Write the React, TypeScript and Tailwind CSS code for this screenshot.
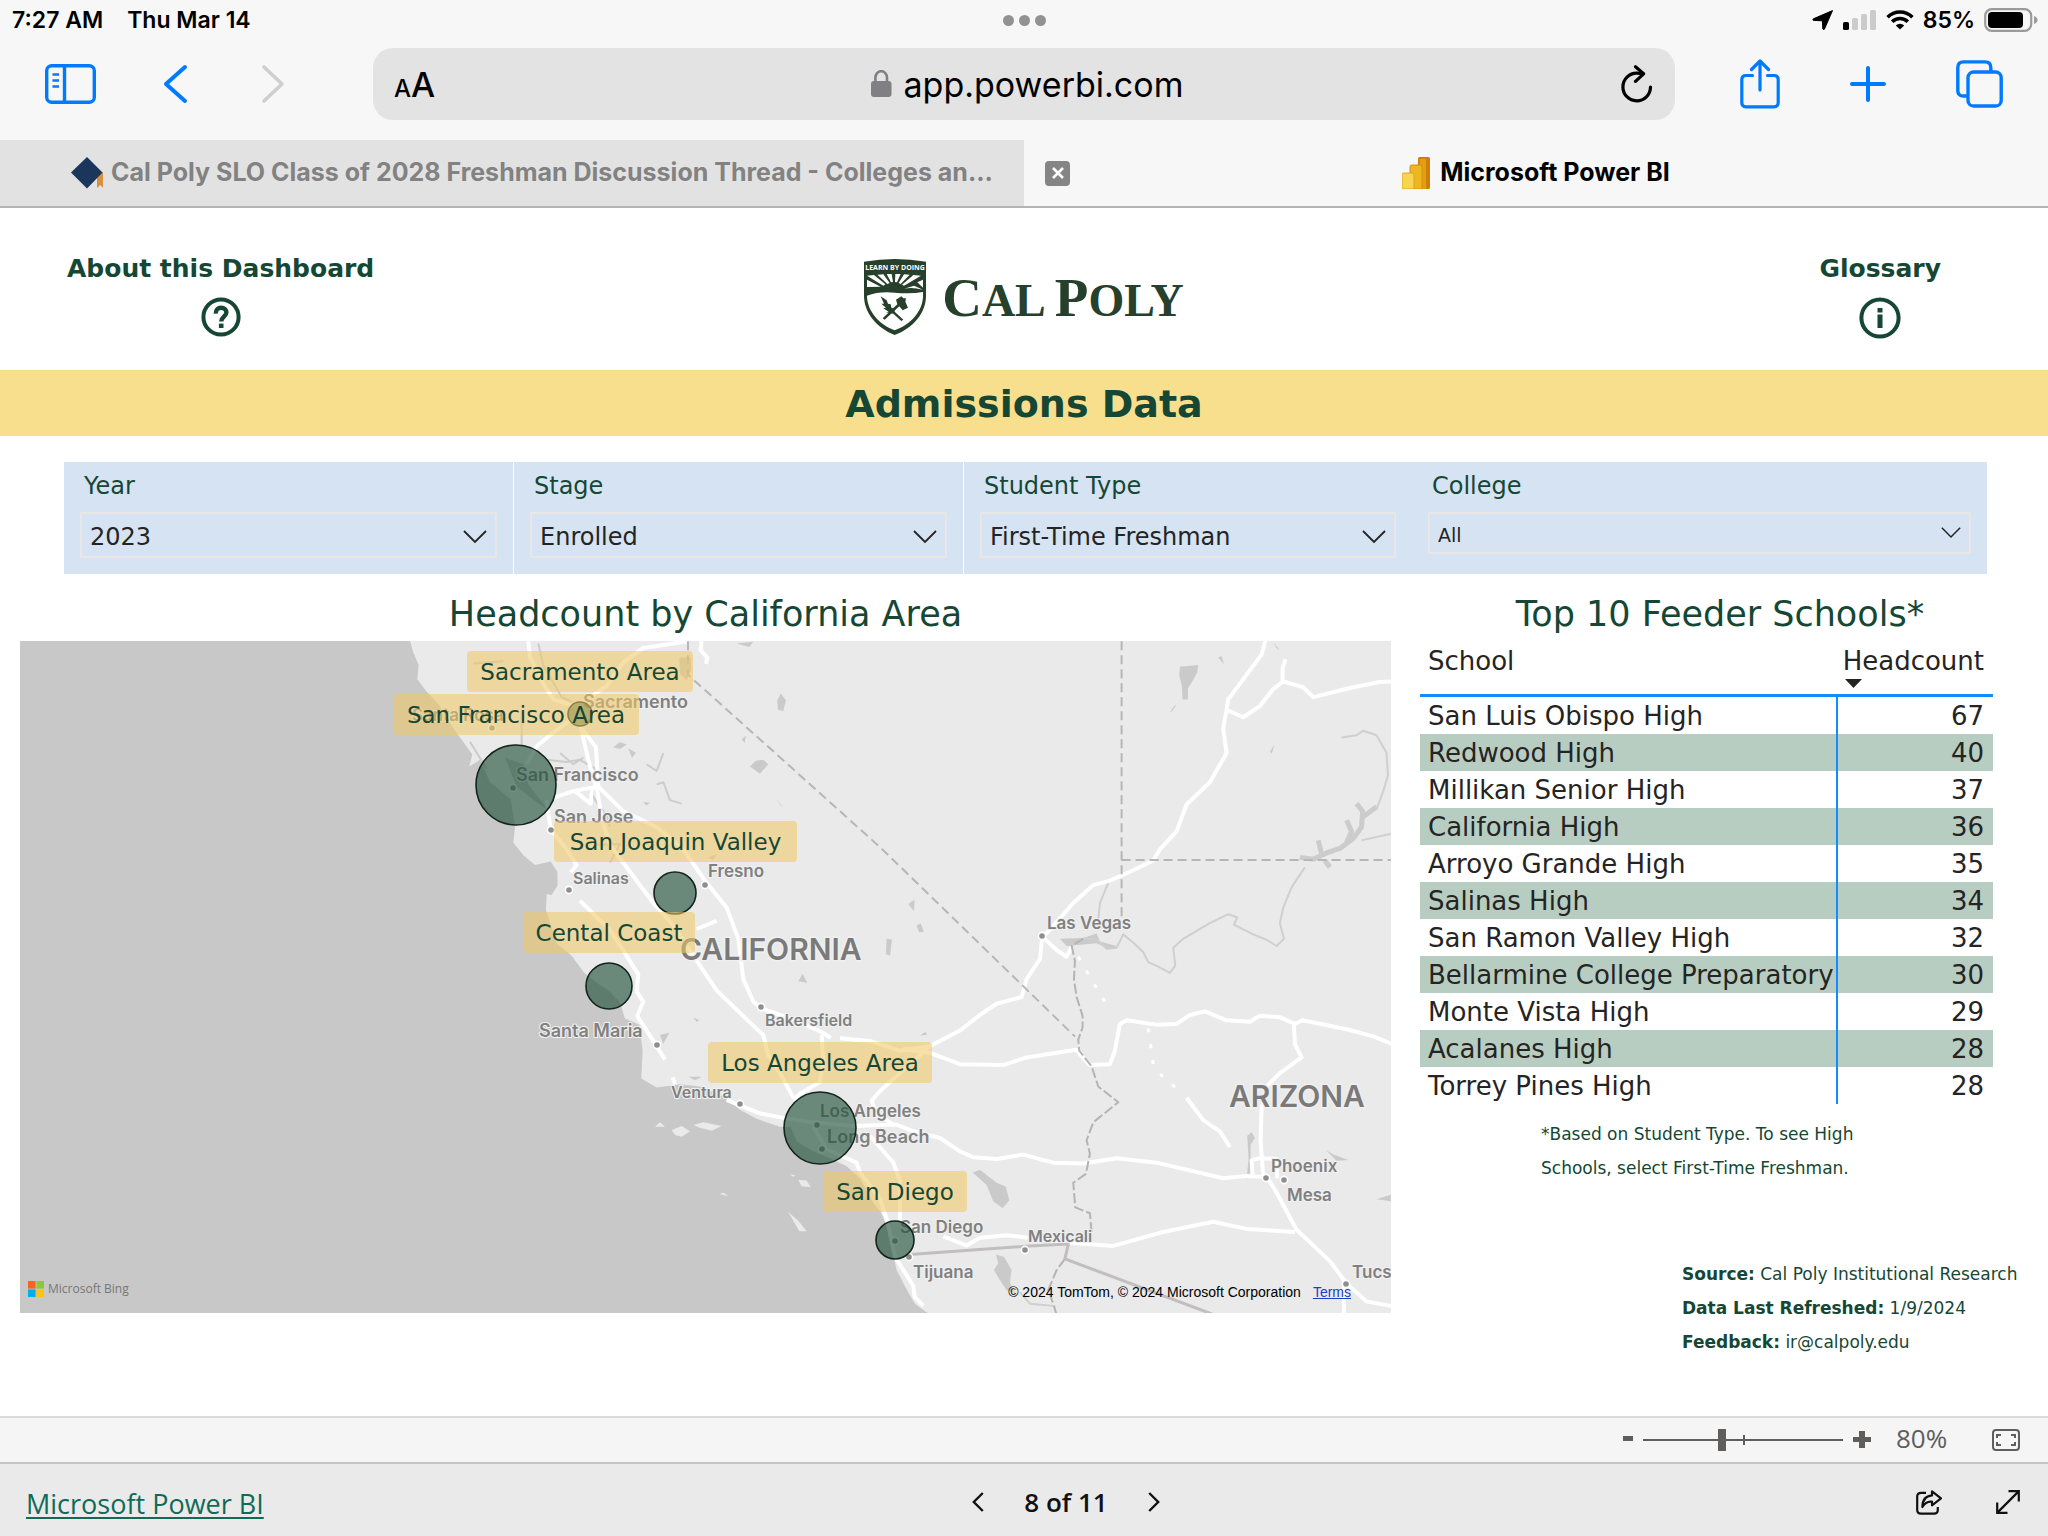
import React, { useState } from "react";

const FILTERS = [
  { id: "year", label: "Year", value: "2023", small: false },
  { id: "stage", label: "Stage", value: "Enrolled", small: false },
  { id: "type", label: "Student Type", value: "First-Time Freshman", small: false },
  { id: "college", label: "College", value: "All", small: true },
];

const SCHOOLS = [
  { name: "San Luis Obispo High", count: 67 },
  { name: "Redwood High", count: 40 },
  { name: "Millikan Senior High", count: 37 },
  { name: "California High", count: 36 },
  { name: "Arroyo Grande High", count: 35 },
  { name: "Salinas High", count: 34 },
  { name: "San Ramon Valley High", count: 32 },
  { name: "Bellarmine College Preparatory", count: 30 },
  { name: "Monte Vista High", count: 29 },
  { name: "Acalanes High", count: 28 },
  { name: "Torrey Pines High", count: 28 },
];

const BUBBLES = [
  { cx: 580, cy: 714, r: 12 },
  { cx: 516, cy: 785, r: 40 },
  { cx: 675, cy: 893, r: 21 },
  { cx: 609, cy: 986, r: 23 },
  { cx: 820, cy: 1128, r: 36 },
  { cx: 895, cy: 1240, r: 19 },
];

const CALLOUTS = [
  { text: "Sacramento Area", x: 467, y: 651, w: 226 },
  { text: "San Francisco Area", x: 393, y: 694, w: 246 },
  { text: "San Joaquin Valley", x: 554, y: 821, w: 243 },
  { text: "Cental Coast", x: 523, y: 912, w: 172 },
  { text: "Los Angeles Area", x: 708, y: 1042, w: 224 },
  { text: "San Diego", x: 823, y: 1171, w: 144 },
];

const CITIES = [
  { name: "Sacramento", x: 583, y: 708, size: 18 },
  { name: "Santa Rosa", x: 412, y: 721, size: 17, dot: [492, 728] },
  { name: "San Francisco", x: 516, y: 781, size: 18, dot: [513, 788] },
  { name: "San Jose", x: 554, y: 823, size: 18, dot: [551, 830] },
  { name: "Salinas", x: 573, y: 884, size: 16, dot: [569, 890] },
  { name: "Fresno", x: 708, y: 877, size: 17, dot: [705, 885] },
  { name: "Santa Maria", x: 539, y: 1037, size: 18, dot: [657, 1045] },
  { name: "Bakersfield", x: 765, y: 1026, size: 16, dot: [761, 1007] },
  { name: "Ventura", x: 671, y: 1098, size: 16, dot: [740, 1104] },
  { name: "Los Angeles", x: 820, y: 1117, size: 17, dot: [817, 1125] },
  { name: "Long Beach", x: 827, y: 1143, size: 18, dot: [822, 1149] },
  { name: "San Diego", x: 900, y: 1233, size: 17, dot: [895, 1241] },
  { name: "Tijuana", x: 913, y: 1278, size: 17, dot: [909, 1257] },
  { name: "Mexicali", x: 1028, y: 1242, size: 16, dot: [1025, 1250] },
  { name: "Las Vegas", x: 1047, y: 929, size: 17, dot: [1042, 936] },
  { name: "Phoenix", x: 1271, y: 1172, size: 17, dot: [1266, 1178] },
  { name: "Mesa", x: 1287, y: 1201, size: 17, dot: [1284, 1180] },
  { name: "Tucson", x: 1352, y: 1278, size: 17, dot: [1346, 1284] },
];

// Terrain paths share one coordinate frame, see the <g> in AreaMap
const LAND =
  "M90 25 L100 50 L116 78 L112 110 L140 138 L175 165 L192 188 L225 225 L250 250 L277 278 L268 305 L300 290 L330 340 L392 378 L405 440 L400 475 L430 503 L465 525 L512 517 L532 540 L533 570 L515 592 L500 590 L498 625 L530 700 L575 728 L612 765 L650 788 L690 808 L720 832 L735 868 L778 882 L788 940 L784 1002 L830 1022 L900 1015 L960 1020 L1040 1045 L1080 1072 L1130 1092 L1200 1110 L1232 1110 L1250 1142 L1300 1165 L1350 1180 L1400 1198 L1440 1225 L1480 1280 L1502 1300 L1520 1330 L1535 1380 L1550 1430 L1585 1480 L1605 1505 L1650 1530 L1660 1560 L3100 1560 L3100 0 L90 0 Z";

const ISLANDS =
  "M825 1110 L840 1100 L855 1110 Z M875 1117 L905 1108 L930 1120 L905 1132 L885 1128 Z M940 1106 L970 1100 L1025 1108 L995 1119 L960 1112 Z M1255 1228 L1280 1230 L1292 1245 L1265 1243 Z M1225 1300 L1255 1320 L1280 1343 L1258 1343 L1240 1320 Z M1018 1260 L1032 1257 L1045 1265 Z M1230 1216 L1246 1218 L1240 1222 Z";

const LAKES =
  "M898 62 L932 60 L934 90 L920 112 L900 98 Z M1110 305 L1128 292 L1150 290 L1165 300 L1140 321 Z M1192 158 L1202 142 L1218 157 L1210 181 L1194 178 Z M2400 82 L2455 78 L2452 95 L2436 116 L2424 130 L2424 155 L2408 155 L2406 125 L2398 102 Z M2370 185 L2380 172 L2390 166 L2376 182 Z M2515 62 L2525 58 L2532 76 Z M1778 1212 L1800 1206 L1850 1235 L1878 1244 L1888 1274 L1868 1292 L1840 1276 L1820 1240 Z M1848 1395 L1872 1400 L1895 1430 L1890 1458 L1905 1482 L1880 1475 L1858 1450 L1842 1430 L1855 1415 Z M2040 690 L2110 688 L2150 678 L2160 696 L2210 706 L2190 714 L2150 700 L2060 706 Z M375 285 L430 300 L445 345 L505 402 L470 385 L410 350 Z M700 262 L720 250 L740 256 L720 266 Z M745 264 L768 274 L756 286 Z M1585 612 L1604 602 L1602 628 Z M1610 660 L1622 655 L1632 674 L1618 676 Z M1520 690 L1536 692 L1530 728 L1518 724 Z M1255 785 L1268 768 L1282 788 Z M840 905 L868 900 L850 925 Z M925 998 L965 998 L945 1006 Z M1190 378 L1210 396 L1200 390 Z M2670 272 L2684 256 L2676 276 Z M2838 1162 L2860 1172 L2905 1184 L2870 1186 Z M2990 1272 L3033 1262 L3033 1276 Z M2602 1130 L2615 1122 L2625 1135 L2612 1150 L2612 1210 L2600 1230 L2606 1180 Z M1085 244 L1098 236 L1094 252 Z M985 508 L1012 500 L998 514 Z M790 384 L812 386 L798 392 Z M1620 906 L1636 898 L1642 904 Z M1070 30 L1120 26 L1108 38 Z M940 866 L958 872 L950 876 Z M2680 26 L2700 46 L2690 40 Z";

const RESERVOIR =
  "M2760 508 L2800 512 L2840 498 L2880 488 L2920 466 L2945 440 L2948 405 L2930 388 M2945 420 L2990 395 M2815 470 L2825 500 M2900 425 L2915 450 L2900 475 M2835 515 L2850 530";

const CREEKS =
  "M475 30 L490 80 L530 130 L545 150 L575 160 M425 180 L425 260 M270 250 L320 310 M500 290 L560 295 L600 290 L650 312 M540 275 L580 300 L610 285 M630 360 L650 385 L680 415 L690 440 M800 300 L830 315 L850 275 M830 345 L850 340 L870 380 L905 388 M280 75 L370 70 M650 480 L720 478 L690 520";

const RIVER =
  "M2075 705 L2110 690 L2150 690 L2180 712 L2210 710 L2230 680 L2262 700 L2290 720 L2305 742 L2335 752 L2370 766 L2386 750 L2380 710 L2410 690 L2450 672 L2490 655 L2545 635 L2572 642 L2562 658 L2620 680 L2660 692 L2690 706 L2712 690 L2700 655 L2710 620 L2735 575 L2775 530 M2990 400 L3010 360 L3024 325 L3020 275 L2990 235 L2950 225 L2930 235 L2885 240 M2945 470 L3033 455 M2155 650 L2160 610 L2185 565 M1920 1480 L1950 1505 L2020 1510";

const ROADS = [
  "M445 25 L450 60 L490 120 L520 155 L590 172 L608 235 L625 290 L650 355",
  "M590 172 L680 125 L730 72 L790 40 L880 30 L925 25",
  "M965 25 L962 45 L982 62 L978 76",
  "M590 190 L510 235 L470 260 L440 300",
  "M520 375 L580 360 L650 350 L665 420 L690 480 L740 530 L820 610 L880 660 L960 750 L1010 805 L1100 870 L1150 905 L1165 950 L1200 990 L1240 1045",
  "M605 220 L648 262 L655 350 L730 405 L830 440 L910 490 L975 560 L1040 620 L1075 690 L1090 780 L1120 830 L1143 845 L1240 870 L1330 900 L1352 912",
  "M585 360 L632 388 L636 350",
  "M500 380 L512 445 L560 490 L590 525 L572 542",
  "M600 605 L690 670 L740 728 L775 770 L770 808 L790 830 L772 862 L830 930 L855 960",
  "M878 1000 L886 1015 M1040 1050 L1080 1062 L1140 1080 L1210 1090 L1300 1100 L1420 1108 L1550 1105 L1600 1120 L1680 1135 L1740 1165 L1780 1178 L1850 1182 L1930 1172 L2020 1190 L2110 1192 L2210 1180 L2330 1190 L2530 1225 L2600 1220 L2660 1222 L2685 1250 L2750 1340 L2850 1410 L2900 1460 L2960 1500 L3040 1511",
  "M1380 912 L1470 918 L1560 940 L1650 930 M1325 905 L1330 960 L1320 1010 L1260 1036 L1240 1050",
  "M950 668 L1010 650",
  "M2660 15 L2645 55 L2545 155 L2530 220 L2540 275 L2490 340 L2420 390 L2390 450 L2340 490 L2320 515 L2250 540 L2190 560 L2140 570 L2080 610 L2010 670 L1987 685 L1980 735 L1940 780 L1925 820 L1850 835 L1800 860 L1740 895 L1650 930 L1560 990 L1500 1030 L1475 1052 L1490 1080 L1540 1105",
  "M3040 115 L3000 116 L2920 128 L2800 150 L2770 128 L2710 115 L2680 132 L2640 170 L2590 195 L2545 180 M2708 115 L2708 85 L2717 65",
  "M1570 935 L1650 945 L1740 970 L1870 972 L1940 955 L2088 938 L2130 972 L2190 970 L2205 940 L2220 880 L2240 872 L2330 882 L2390 880 L2430 860 L2475 852 L2540 872 L2610 875 L2640 862 L2700 865 L2745 880 L2768 872 L2900 892 L2980 908 L3040 926",
  "M2742 880 L2745 925 L2765 955 L2700 990 L2660 1020 L2645 1070 L2642 1140 L2650 1222",
  "M2618 1215 L2615 1185 L2640 1180 L2690 1182 L2692 1225",
  "M1690 1355 L1760 1375 L1800 1358 L1880 1352 L2090 1370 L2200 1376 L2350 1345 L2500 1322 L2600 1338 L2745 1345",
  "M2892 1460 L2892 1540",
  "M1987 685 L2030 715 L2060 730 L2075 708",
  "M1300 1110 L1340 1160 L1430 1190 L1440 1212 L1500 1270 L1522 1320 L1545 1400 L1600 1465 L1604 1490 L1630 1510",
  "M1470 1130 L1540 1190 L1560 1230 L1560 1320",
  "M2420 1045 L2470 1095 L2520 1120 L2550 1155",
];

function SafariChrome(): React.JSX.Element {
  return (
    <header className="bg-[#f7f7f7] font-['Inter','Liberation_Sans',sans-serif]">
      {/* Status bar */}
      <div className="grid h-10 grid-cols-3 items-center pr-[10px] pl-3 text-[23px] font-semibold text-black">
        <div className="flex gap-6">
          <span>7:27 AM</span>
          <span>Thu Mar 14</span>
        </div>
        <div className="flex justify-center gap-[5px]">
          <span className="size-[11px] rounded-full bg-[#929292]" />
          <span className="size-[11px] rounded-full bg-[#929292]" />
          <span className="size-[11px] rounded-full bg-[#929292]" />
        </div>
        <div className="flex items-center justify-end gap-[9px]">
          <svg className="h-5 w-[22px]" viewBox="0 0 22 20">
            <path d="M20.5 .6 L12.4 19.2 Q11.4 20.4 10.8 18.8 L10.4 10.8 L1.8 10.4 Q0 10 1.4 8.8 Z" fill="#000" stroke="#000" strokeWidth="1" strokeLinejoin="round" />
          </svg>
          <svg className="h-5 w-[34px]" viewBox="0 0 34 20">
            <rect x="0" y="12" width="6" height="8" rx="1.6" fill="#000" />
            <rect x="9" y="8" width="6" height="12" rx="1.6" fill="#cbcbcb" />
            <rect x="18" y="4" width="6" height="16" rx="1.6" fill="#cbcbcb" />
            <rect x="27" y="0" width="6" height="20" rx="1.6" fill="#cbcbcb" />
          </svg>
          <svg className="h-5 w-7" viewBox="0 0 28 20" fill="none" stroke="#000" strokeWidth="3.6">
            <path d="M1.6 7.2 A17.5 17.5 0 0 1 26.4 7.2" />
            <path d="M6.2 11.8 A11 11 0 0 1 21.8 11.8" />
            <path d="M14 19.6 L9.8 15.4 A6 6 0 0 1 18.2 15.4 Z" fill="#000" stroke="none" />
          </svg>
          <span>85%</span>
          <svg className="h-6 w-[54px]" viewBox="0 0 54 24">
            <rect x="1.2" y="1.2" width="46" height="21.6" rx="6.5" fill="none" stroke="#9b9b9b" strokeWidth="2.2" />
            <rect x="4" y="4" width="35" height="16" rx="4" fill="#000" />
            <path d="M50 8 Q53.6 9.6 53.6 12 Q53.6 14.4 50 16 Z" fill="#9b9b9b" />
          </svg>
        </div>
      </div>

      {/* Toolbar */}
      <div className="flex h-[100px] items-start px-[45px] pt-2 text-[#007aff]">
        <div className="flex h-[72px] items-center gap-[66px]">
          <button type="button" aria-label="Sidebar">
            <svg className="h-10 w-[51px]" viewBox="0 0 51 40" fill="none" stroke="currentColor" strokeWidth="3.4">
              <rect x="1.7" y="1.7" width="47.6" height="36.6" rx="5" />
              <path d="M19.5 2 V38" />
              <path d="M7.5 10.5 H14 M7.5 16.5 H14 M7.5 22.5 H14" strokeWidth="2.6" />
            </svg>
          </button>
          <button type="button" aria-label="Back">
            <svg className="h-10 w-[30px]" viewBox="0 0 30 40" fill="none" stroke="currentColor" strokeWidth="4" strokeLinecap="round" strokeLinejoin="round">
              <path d="M23 3 L4 20 L23 37" />
            </svg>
          </button>
          <button type="button" aria-label="Forward" className="text-[#cfcfcf]">
            <svg className="h-10 w-[30px]" viewBox="0 0 30 40" fill="none" stroke="currentColor" strokeWidth="3.6" strokeLinecap="round" strokeLinejoin="round">
              <path d="M6 3 L24 20 L6 37" />
            </svg>
          </button>
        </div>
        <div className="ml-[85px] flex h-[72px] flex-1 items-center justify-between rounded-[20px] bg-[#e3e3e3] px-[21px] text-black">
          <button type="button" aria-label="Page settings" className="w-[90px] text-left">
            <span className="text-2xl font-medium">A</span>
            <span className="text-[34px] font-medium">A</span>
          </button>
          <div className="flex items-center gap-3">
            <svg className="h-7 w-[21px]" viewBox="0 0 21 28">
              <rect x="0" y="11" width="20.5" height="16" rx="3" fill="#808084" />
              <path d="M4.4 12 V7.6 A5.8 6.4 0 0 1 16 7.6 V12" fill="none" stroke="#808084" strokeWidth="2.6" />
            </svg>
            <input
              type="text"
              aria-label="Address"
              defaultValue="app.powerbi.com"
              className="w-[284px] bg-transparent text-[34px] outline-none"
            />
          </div>
          <button type="button" aria-label="Reload" className="flex w-20 justify-end pr-[1px]">
            <svg className="h-[38px] w-8" viewBox="0 0 32 38" fill="none" stroke="#000" strokeWidth="3.2" strokeLinecap="round" strokeLinejoin="round">
              <path d="M29.5 22 A13.8 13.8 0 1 1 15.8 8.2 L22 8.6" />
              <path d="M14.5 1.8 L22.6 8.8 L14.5 16.4" />
            </svg>
          </button>
        </div>
        <div className="ml-[65px] flex h-[72px] items-center gap-[70px]">
          <button type="button" aria-label="Share">
            <svg className="h-[50px] w-10" viewBox="0 0 40 50" fill="none" stroke="currentColor" strokeWidth="3.2" strokeLinecap="round" strokeLinejoin="round">
              <path d="M12.5 16.5 H6 Q1.8 16.5 1.8 20.6 V43.6 Q1.8 47.8 6 47.8 H34 Q38.2 47.8 38.2 43.6 V20.6 Q38.2 16.5 34 16.5 H27.5" />
              <path d="M20 31 V2.5 M11.5 10.5 L20 2 L28.5 10.5" />
            </svg>
          </button>
          <button type="button" aria-label="New tab">
            <svg className="size-9" viewBox="0 0 36 36" fill="none" stroke="currentColor" strokeWidth="4" strokeLinecap="round">
              <path d="M18 2 V34 M2 18 H34" />
            </svg>
          </button>
          <button type="button" aria-label="Tab overview">
            <svg className="h-12 w-[47px]" viewBox="0 0 47 48" fill="none" stroke="currentColor" strokeWidth="3.4">
              <path d="M11 36 H7.5 Q1.8 36 1.8 30.4 V7.6 Q1.8 1.9 7.5 1.9 H29 Q34.8 1.9 34.8 7.6 V11" />
              <rect x="12" y="12" width="33.2" height="34" rx="5.6" />
            </svg>
          </button>
        </div>
      </div>

      {/* Tabs */}
      <div className="grid h-[68px] grid-cols-2 border-b-2 border-[#b4b4b4] text-[25px] font-bold">
        <button type="button" className="flex items-center justify-center gap-2 bg-[#e2e2e2] pl-10 text-[#828282]">
          <svg className="size-8 shrink-0" viewBox="0 0 32 32">
            <path d="M26 17 L32 15 V31 L29.4 28 L26 31 Z" fill="#d8903f" />
            <path d="M16 0 L31.5 15.6 L16 31.6 L0 15.6 Z" fill="#1b365d" />
          </svg>
          <span className="whitespace-nowrap">Cal Poly SLO Class of 2028 Freshman Discussion Thread - Colleges an...</span>
        </button>
        <div className="grid grid-cols-[1fr_auto_1fr] items-center px-[21px] text-black">
          <button type="button" aria-label="Close tab" className="flex size-[25px] items-center justify-center rounded-[4px] bg-[#858585]">
            <svg className="size-3" viewBox="0 0 12 12" stroke="#fff" strokeWidth="2.6">
              <path d="M1 1 L11 11 M11 1 L1 11" />
            </svg>
          </button>
          <button type="button" className="flex items-center gap-[10px]">
            <svg className="h-8 w-7" viewBox="0 0 28 32">
              <path d="M16 1.5 Q16 0 17.5 0 H26.5 Q28 0 28 1.5 V30.5 Q28 32 26.5 32 H16 Z" fill="#cf7e0c" />
              <path d="M17.6 2 H24 V32 H17.6 Z" fill="#e39f14" />
              <path d="M8 9.5 Q8 8 9.5 8 H18 Q20 8 20 10 V32 H8 Z" fill="#eeb722" stroke="#cf8a12" strokeWidth=".9" />
              <path d="M0 17.5 Q0 16 1.5 16 H10 Q12 16 12 18 V32 H1.5 Q0 32 0 30.5 Z" fill="#f7d452" stroke="#d8a023" strokeWidth=".9" />
            </svg>
            <span>Microsoft Power BI</span>
          </button>
        </div>
      </div>
    </header>
  );
}

function CalPolyLogo(): React.JSX.Element {
  return (
    <div className="flex items-center gap-4 text-[#26402b]">
      <svg className="h-[76px] w-[62px]" viewBox="0 0 186 228" role="img" aria-label="Cal Poly shield">
        <path d="M0 8 Q92 -8 186 8 V110 C186 160 150 205 92 228 C36 205 0 160 0 110 Z" fill="currentColor" />
        {/* Sun rays and hills */}
        <path
          d="M9 50 L30 48 L64 76 L58 80 Z M9 62 L50 83 L9 84 Z M40 47 L58 46 L77 72 L70 75 Z M68 45 L83 45 L87 69 L81 70 Z M94 45 L110 45 L99 70 L93 69 Z M120 46 L137 47 L110 75 L104 72 Z M148 48 L171 50 L120 80 L114 77 Z"
          fill="#fff"
        />
        <path d="M177 62 L160 70 L177 86 Z M150 80 L164 86 L176 92 Q146 84 120 89 L138 84 Z" fill="#fff" />
        <path d="M9 110 Q46 96 92 101 Q140 106 177 99 V112 C176 156 142 196 92 214 C44 196 10 156 9 112 Z" fill="#fff" />
        {/* Quill and hammer */}
        <path d="M50 112 L68 124 L72 134 L80 136 L82 146 L92 150 L92 158 L118 182 L112 186 L88 164 L66 160 L74 158 L58 148 L66 146 L52 134 L60 134 Z" fill="currentColor" />
        <path d="M96 122 L112 112 L118 118 L126 118 L124 128 L132 146 L116 154 L106 142 L62 182 L56 178 L100 136 Z" fill="currentColor" />
        <text x="93" y="34" textAnchor="middle" fill="#fff" fontSize="21" fontWeight="700" fontFamily="Open Sans, sans-serif">
          LEARN BY DOING
        </text>
      </svg>
      <span className="font-['Liberation_Serif',serif] text-[46px] leading-none font-bold">
        <span className="text-[55px]">C</span>AL <span className="text-[55px]">P</span>OLY
      </span>
    </div>
  );
}

function ReportHeader(): React.JSX.Element {
  return (
    <div className="grid h-[162px] grid-cols-3 px-[67px] text-[#154734]">
      <button type="button" className="mt-[45px] flex flex-col items-center gap-3 justify-self-start">
        <span className="text-[25px] leading-8 font-bold">About this Dashboard</span>
        <svg className="size-10" viewBox="0 0 40 40" fill="none" stroke="currentColor">
          <circle cx="20" cy="20" r="17.6" strokeWidth="4" />
          <path d="M14.8 16.6 C14.6 12.6 17 10.8 20 10.8 C23.4 10.8 25.4 12.8 25.4 15.6 C25.4 19.6 20.2 19.8 20.2 24.6" strokeWidth="4.4" />
          <path d="M20.2 26.6 V31" strokeWidth="4.6" />
        </svg>
      </button>
      <div className="mt-[51px] justify-self-center">
        <CalPolyLogo />
      </div>
      <button type="button" className="mt-[45px] mr-10 flex flex-col items-center gap-3 justify-self-end">
        <span className="text-[25px] leading-8 font-bold">Glossary</span>
        <svg className="size-[42px]" viewBox="0 0 42 42" fill="none" stroke="currentColor">
          <circle cx="21" cy="21" r="18.6" strokeWidth="4" />
          <path d="M21 11 V15.4 M21 17.6 V31" strokeWidth="5" />
        </svg>
      </button>
    </div>
  );
}

function FilterBar(): React.JSX.Element {
  return (
    <div className="mt-[26px] mr-[61px] ml-16 grid h-28 grid-cols-[450fr_450fr_448fr_575fr] bg-[#d5e3f3]">
      {FILTERS.map((filter, i) => (
        <div key={filter.id} className={`px-4 ${i < 2 ? "border-r border-white" : ""}`}>
          <label htmlFor={filter.id} className="block px-1 pt-2 text-2xl leading-8 text-[#154734]">
            {filter.label}
          </label>
          <div className={`relative mt-[10px] border-2 border-[#e8e7e5] ${filter.small ? "h-[42px] text-[19px]" : "h-[46px] text-2xl"}`}>
            <select id={filter.id} defaultValue={filter.value} className="size-full appearance-none bg-transparent pt-1 pl-2 text-[#252423] outline-none">
              <option>{filter.value}</option>
            </select>
            <svg
              className={`pointer-events-none absolute right-2 ${filter.small ? "top-[13px] w-[20px]" : "top-4 w-6"}`}
              viewBox="0 0 24 14"
              fill="none"
              stroke="#252423"
              strokeWidth="1.8"
            >
              <path d="M1 1 L12 12 L23 1" />
            </svg>
          </div>
        </div>
      ))}
    </div>
  );
}

function AreaMap(): React.JSX.Element {
  return (
    <div className="relative">
      <svg className="block h-auto w-full bg-[#c8c8c8]" viewBox="20 641 1371 672" role="img" aria-label="Headcount by California area">
        <g transform="translate(380 630) scale(0.3333 0.4476)" strokeLinejoin="round">
          <path d={LAND} fill="#eaeaea" />
          <path d={ISLANDS} fill="#eaeaea" />
          <path d={LAKES} fill="#cacaca" />
          <path d={RESERVOIR} fill="none" stroke="#cccccc" strokeWidth="5" vectorEffect="non-scaling-stroke" />
          <path d={CREEKS} fill="none" stroke="#cccccc" strokeWidth="2" vectorEffect="non-scaling-stroke" />
          <path d={RIVER} fill="none" stroke="#cfcfcf" strokeWidth="2" vectorEffect="non-scaling-stroke" />
          {ROADS.map((d) => (
            <path key={d} d={d} fill="none" stroke="#ffffff" strokeWidth="4" vectorEffect="non-scaling-stroke" />
          ))}
          <path
            d="M2095 730 L2150 800 L2190 850 M2305 890 L2320 970 L2350 1000 L2410 1036"
            fill="none"
            stroke="#ffffff"
            strokeWidth="3"
            strokeDasharray="4 12"
            vectorEffect="non-scaling-stroke"
          />
          <path
            d="M924 25 L924 100 L1500 485 L2085 908 M2225 25 L2225 640 M2225 514 L3033 514"
            fill="none"
            stroke="#b8b6b5"
            strokeWidth="2"
            strokeDasharray="9 5"
            vectorEffect="non-scaling-stroke"
          />
          <path
            d="M2110 690 L2075 705 L2085 740 L2082 780 L2090 820 L2108 862 L2108 888 L2095 915 L2098 940 L2135 975 L2155 1020 L2215 1055 L2140 1100 L2120 1140 L2130 1170 L2118 1215 L2080 1235 L2086 1290 L2130 1303 L2135 1345 M2055 1405 L2030 1430 L2005 1475 L2022 1510 L2030 1530"
            fill="none"
            stroke="#b6b4b3"
            strokeWidth="2"
            strokeDasharray="10 3"
            vectorEffect="non-scaling-stroke"
          />
          <path d="M1590 1395 L1950 1376 L2065 1372 L2055 1405 L2510 1532" fill="none" stroke="#c0bebe" strokeWidth="3" vectorEffect="non-scaling-stroke" />
        </g>

        {CITIES.map((city) => (
          <g key={city.name}>
            {city.dot && <circle cx={city.dot[0]} cy={city.dot[1]} r="3.6" fill="#8e8e8e" stroke="#fff" strokeWidth="1.6" />}
            <text
              x={city.x}
              y={city.y}
              fontSize={city.size}
              fontWeight="600"
              fill="#808080"
              stroke="#f0f0f0"
              strokeWidth="2"
              paintOrder="stroke"
              fontFamily="Inter, Liberation Sans, sans-serif"
            >
              {city.name}
            </text>
          </g>
        ))}
        <g fontSize="30" fontWeight="600" fill="#7a7a7a" stroke="#f0f0f0" strokeWidth="3" paintOrder="stroke" fontFamily="Inter, Liberation Sans, sans-serif">
          <text x="680" y="960">CALIFORNIA</text>
          <text x="1229" y="1107">ARIZONA</text>
        </g>

        {BUBBLES.map((b) => (
          <circle key={b.cx} cx={b.cx} cy={b.cy} r={b.r} fill="#21523c" fillOpacity="0.64" stroke="#12241b" strokeWidth="1.6" />
        ))}
        {CALLOUTS.map((c) => (
          <g key={c.text}>
            <rect x={c.x} y={c.y} width={c.w} height="41" rx="4" fill="#efc866" fillOpacity="0.57" />
            <text x={c.x + c.w / 2} y={c.y + 29} textAnchor="middle" fontSize="23" fill="#154734" fontFamily="DejaVu Sans, sans-serif">
              {c.text}
            </text>
          </g>
        ))}
      </svg>
      <div className="absolute bottom-4 left-2 flex items-center gap-1">
        <svg className="size-4" viewBox="0 0 16 16">
          <path d="M0 0 H7.6 V7.6 H0 Z" fill="#f26522" />
          <path d="M8.4 0 H16 V7.6 H8.4 Z" fill="#8dc63f" />
          <path d="M0 8.4 H7.6 V16 H0 Z" fill="#00aeef" />
          <path d="M8.4 8.4 H16 V16 H8.4 Z" fill="#ffc20e" />
        </svg>
        <span className="font-['Open_Sans',sans-serif] text-[12px] leading-4 font-medium text-[#777777]">Microsoft Bing</span>
      </div>
      <div className="absolute right-10 bottom-[9px] flex gap-3 font-['Liberation_Sans',sans-serif] text-sm leading-6 text-black">
        <span>© 2024 TomTom, © 2024 Microsoft Corporation</span>
        <a href="#terms" className="text-[#1a3fc4] underline">
          Terms
        </a>
      </div>
    </div>
  );
}

function FeederSchools(): React.JSX.Element {
  return (
    <section className="pl-[29px]">
      <h2 className="mr-[28px] pt-5 text-center text-[35px] leading-[40px] text-[#154734]">Top 10 Feeder Schools*</h2>
      <table className="w-[573px] max-w-full border-collapse text-[26px] text-[#252423]">
        <thead>
          <tr className="h-[61px] border-b-3 border-[#118dff] align-top">
            <th scope="col" className="w-[417px] pl-2 text-left font-normal">
              <span className="block leading-[54px]">School</span>
            </th>
            <th scope="col" className="pr-[9px] text-right font-normal">
              <span className="block leading-[54px]">Headcount</span>
              <svg className="-mt-[9px] ml-2 block h-[9px] w-[17px]" viewBox="0 0 17 9">
                <path d="M0 0 H17 L8.5 9 Z" fill="#252423" />
              </svg>
            </th>
          </tr>
        </thead>
        <tbody>
          {SCHOOLS.map((school) => (
            <tr key={school.name} className="h-[37px] even:bg-[#b7cdc2]">
              <td className="border-r-2 border-[#118dff] pt-[1px] pl-2 leading-9 whitespace-nowrap">{school.name}</td>
              <td className="pt-[1px] pr-[9px] text-right leading-9">{school.count}</td>
            </tr>
          ))}
        </tbody>
      </table>
      <p className="mt-[13px] ml-[121px] w-[340px] text-[17px] leading-[34px] text-[#154734]">
        *Based on Student Type. To see High Schools, select First-Time Freshman.
      </p>
      <div className="mt-[72px] ml-[262px] text-[17px] leading-[34px] whitespace-nowrap text-[#154734]">
        <p>
          <b>Source:</b> Cal Poly Institutional Research
        </p>
        <p>
          <b>Data Last Refreshed:</b> 1/9/2024
        </p>
        <p>
          <b>Feedback:</b> ir@calpoly.edu
        </p>
      </div>
    </section>
  );
}

function ZoomBar(): React.JSX.Element {
  const [zoom, setZoom] = useState(39);

  return (
    <div className="flex h-[46px] items-center justify-end border-t-2 border-[#dedcda] bg-[#f5f5f5] pr-7 text-[#605e5c]">
      <button type="button" aria-label="Zoom out">
        <svg className="h-[18px] w-[10px]" viewBox="0 0 10 18">
          <rect y="5" width="10" height="5" fill="currentColor" />
        </svg>
      </button>
      <div className="relative mx-[10px] flex h-6 w-[200px] items-center">
        <input
          type="range"
          aria-label="Zoom"
          min={0}
          max={100}
          value={zoom}
          onChange={(e) => setZoom(Number(e.target.value))}
          className="h-6 w-full appearance-none bg-transparent [&::-webkit-slider-runnable-track]:h-[2px] [&::-webkit-slider-runnable-track]:bg-[#605e5c] [&::-webkit-slider-thumb]:-mt-[10px] [&::-webkit-slider-thumb]:h-[22px] [&::-webkit-slider-thumb]:w-2 [&::-webkit-slider-thumb]:appearance-none [&::-webkit-slider-thumb]:bg-[#605e5c]"
        />
        <span className="absolute top-[7px] left-1/2 h-[10px] w-[2px] bg-[#605e5c]" />
      </div>
      <button type="button" aria-label="Zoom in">
        <svg className="size-[18px]" viewBox="0 0 18 18">
          <path d="M0 6 H6 V0 H12 V6 H18 V11 H12 V17 H6 V11 H0 Z" fill="currentColor" />
        </svg>
      </button>
      <span className="ml-[25px] w-24 pb-1 font-['Open_Sans',sans-serif] text-[26px] leading-8">80%</span>
      <button type="button" aria-label="Fit to page">
        <svg className="h-[22px] w-[28px]" viewBox="0 0 28 22" fill="none" stroke="currentColor" strokeWidth="2">
          <rect x="1" y="1" width="26" height="20" rx="3" />
          <path d="M5 9 V6 H9 M19 6 H23 V9 M23 13 V16 H19 M9 16 H5 V13" />
        </svg>
      </button>
    </div>
  );
}

function PageFooter(): React.JSX.Element {
  return (
    <footer className="grid h-[74px] grid-cols-3 items-center border-t-2 border-[#c4c4c4] bg-[#eaeaea] pr-7 pl-[26px] font-['Open_Sans','Noto_Sans',sans-serif] text-[27px]">
      <div className="pt-2">
        <a href="#powerbi" className="text-[#0f6b56] underline decoration-2 underline-offset-3">
          Microsoft Power BI
        </a>
      </div>
      <div className="flex items-center justify-center gap-10 pt-1 pl-[86px] text-[26px] font-semibold text-[#111]">
        <button type="button" aria-label="Previous page">
          <svg className="h-5 w-3" viewBox="0 0 12 20" fill="none" stroke="#111" strokeWidth="2.4">
            <path d="M10.8 1 L1.8 10 L10.8 19" />
          </svg>
        </button>
        <span>8 of 11</span>
        <button type="button" aria-label="Next page">
          <svg className="h-5 w-3" viewBox="0 0 12 20" fill="none" stroke="#111" strokeWidth="2.4">
            <path d="M1.2 1 L10.2 10 L1.2 19" />
          </svg>
        </button>
      </div>
      <div className="flex items-center justify-end gap-[54px] pt-1">
        <button type="button" aria-label="Share report">
          <svg className="h-[25px] w-[26px]" viewBox="0 0 26 25" fill="none" stroke="#111" strokeWidth="2.2" strokeLinejoin="round">
            <path d="M10 2.8 H5 Q1.2 2.8 1.2 6.4 V20 Q1.2 23.6 5 23.6 H18 Q21.8 23.6 21.8 20 V17" />
            <path d="M16 1.4 L25 8.4 L16 15.4 V11.6 Q9.6 11 6.4 17 Q6.4 6.2 16 5.4 Z" />
          </svg>
        </button>
        <button type="button" aria-label="Full screen">
          <svg className="size-6" viewBox="0 0 24 24" fill="none" stroke="#111" strokeWidth="2.2">
            <path d="M1.4 22.6 L22.6 1.4 M12.5 1.2 H22.8 V11.5 M1.2 12.5 V22.8 H11.5" />
          </svg>
        </button>
      </div>
    </footer>
  );
}

export default function App(): React.JSX.Element {
  return (
    <div className="flex min-h-screen flex-col overflow-x-hidden bg-white font-['DejaVu_Sans',sans-serif]">
      <SafariChrome />
      <main className="flex-1">
        <ReportHeader />
        <h1 className="bg-[#f8df8d] pt-[2px] text-center text-[38px] leading-[64px] font-bold text-[#154734]">Admissions Data</h1>
        <FilterBar />
        <div className="grid grid-cols-[1391fr_657fr]">
          <section className="pl-5">
            <h2 className="pt-5 pb-[7px] text-center text-[35px] leading-[40px] text-[#154734]">Headcount by California Area</h2>
            <AreaMap />
          </section>
          <FeederSchools />
        </div>
      </main>
      <ZoomBar />
      <PageFooter />
    </div>
  );
}
